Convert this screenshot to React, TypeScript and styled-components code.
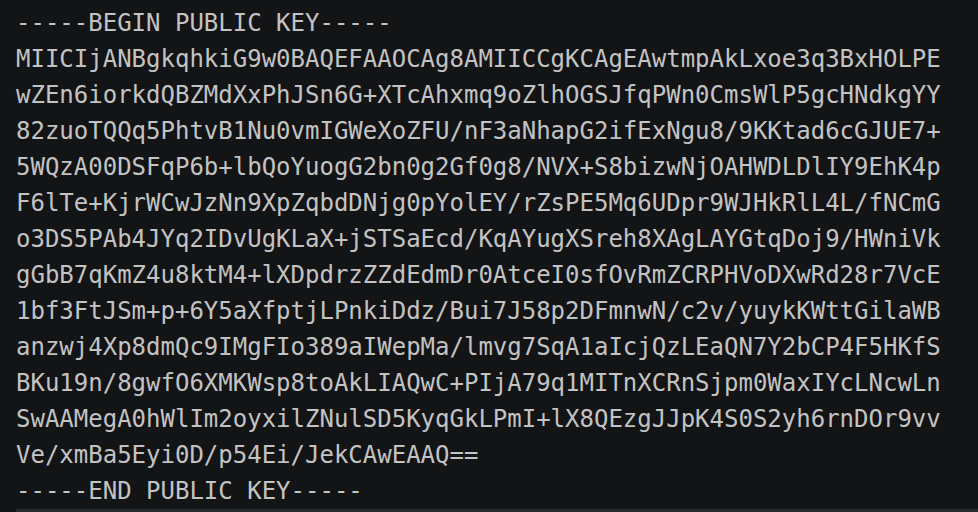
import React from "react";
import styled, { createGlobalStyle } from "styled-components";

const Global = createGlobalStyle`
  html, body {
    margin: 0;
    padding: 0;
    background: #131416;
    overflow: hidden;
  }
`;

const Page = styled.div`
  width: 978px;
  height: 512px;
  background: #131416;
  display: flex;
  flex-direction: column;
  overflow: hidden;
`;

const Code = styled.pre`
  margin: 0;
  padding: 5px 0 0 16px;
  font-family: "DejaVu Sans Mono", "Liberation Mono", monospace;
  font-size: 24px;
  line-height: 36px;
  color: #c3c3c3;
  white-space: pre;
  flex: 1;
`;

const Rule = styled.div`
  margin-left: 16px;
  height: 3px;
  background: #2a2b2e;
  flex: none;
`;

const lines = [
  "-----BEGIN PUBLIC KEY-----",
  "MIICIjANBgkqhkiG9w0BAQEFAAOCAg8AMIICCgKCAgEAwtmpAkLxoe3q3BxHOLPE",
  "wZEn6iorkdQBZMdXxPhJSn6G+XTcAhxmq9oZlhOGSJfqPWn0CmsWlP5gcHNdkgYY",
  "82zuoTQQq5PhtvB1Nu0vmIGWeXoZFU/nF3aNhapG2ifExNgu8/9KKtad6cGJUE7+",
  "5WQzA00DSFqP6b+lbQoYuogG2bn0g2Gf0g8/NVX+S8bizwNjOAHWDLDlIY9EhK4p",
  "F6lTe+KjrWCwJzNn9XpZqbdDNjg0pYolEY/rZsPE5Mq6UDpr9WJHkRlL4L/fNCmG",
  "o3DS5PAb4JYq2IDvUgKLaX+jSTSaEcd/KqAYugXSreh8XAgLAYGtqDoj9/HWniVk",
  "gGbB7qKmZ4u8ktM4+lXDpdrzZZdEdmDr0AtceI0sfOvRmZCRPHVoDXwRd28r7VcE",
  "1bf3FtJSm+p+6Y5aXfptjLPnkiDdz/Bui7J58p2DFmnwN/c2v/yuykKWttGilaWB",
  "anzwj4Xp8dmQc9IMgFIo389aIWepMa/lmvg7SqA1aIcjQzLEaQN7Y2bCP4F5HKfS",
  "BKu19n/8gwfO6XMKWsp8toAkLIAQwC+PIjA79q1MITnXCRnSjpm0WaxIYcLNcwLn",
  "SwAAMegA0hWlIm2oyxilZNulSD5KyqGkLPmI+lX8QEzgJJpK4S0S2yh6rnDOr9vv",
  "Ve/xmBa5Eyi0D/p54Ei/JekCAwEAAQ==",
  "-----END PUBLIC KEY-----",
];

export default function App() {
  return (
    <>
      <Global />
      <Page>
        <Code>{lines.join("\n")}</Code>
        <Rule />
      </Page>
    </>
  );
}
